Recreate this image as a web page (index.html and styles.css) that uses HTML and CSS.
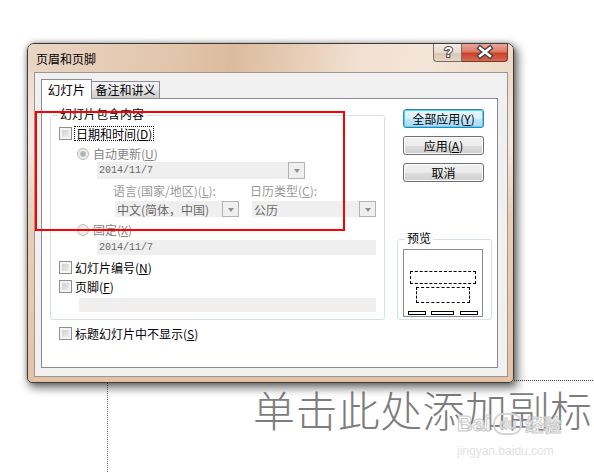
FILE: index.html
```html
<!DOCTYPE html>
<html lang="zh-CN">
<head>
    <meta charset="UTF-8">
    <meta name="viewport" content="width=device-width, initial-scale=1.0">
    <title>页眉和页脚</title>
    <link rel="stylesheet" href="styles.css">
</head>
<body>
    <div class="slide">
        <div class="subtitle-box">
            <div class="subtitle">单击此处添加副标</div>
        </div>

        <div class="watermark">
            <div class="wm-logo"><span class="wm-bai">Bai</span><span class="paw">du</span><span class="wm-cn">经验</span></div>
            <div class="wm-url">jingyan.baidu.com</div>
        </div>

        <div class="dialog">
            <div class="titlebar">
                <span class="title">页眉和页脚</span>
                <div class="caption-btns">
                    <div class="cap-btn help">
                        <svg width="29" height="18" viewBox="0 0 29 18">
                            <text x="14.5" y="14" text-anchor="middle" font-family="Liberation Sans, sans-serif" font-weight="bold" font-size="14" fill="#fff" stroke="#4b4b4b" stroke-width="2" paint-order="stroke">?</text>
                        </svg>
                    </div>
                    <div class="cap-btn close">
                        <svg width="46" height="18" viewBox="0 0 46 18">
                            <path d="M19 5 L29 13 M29 5 L19 13" stroke="#3d3d3d" stroke-width="5" stroke-linecap="square"/>
                            <path d="M19 5 L29 13 M29 5 L19 13" stroke="#fff" stroke-width="2.6" stroke-linecap="square"/>
                        </svg>
                    </div>
                </div>
            </div>

            <div class="client">
                <div class="tabs">
                    <div class="tab active">幻灯片</div>
                    <div class="tab">备注和讲义</div>
                </div>
                <div class="panel">
                    <div class="left-col">
                        <div class="group main-group">
                            <div class="legend">幻灯片包含内容</div>
                            <div class="row check-row r-date">
                                <span class="check"></span>
                                <span class="focus">日期和时间(<u>D</u>)</span>
                            </div>
                            <div class="row radio-row r-auto disabled">
                                <span class="radio on"></span>
                                <span>自动更新(<u>U</u>)</span>
                            </div>
                            <div class="combo r-datecombo">
                                <span class="field-text mono">2014/11/7</span>
                                <span class="drop"></span>
                            </div>
                            <div class="pair r-labels disabled">
                                <span class="pair-label">语言(国家/地区)(<u>L</u>):</span>
                                <span class="pair-label">日历类型(<u>C</u>):</span>
                            </div>
                            <div class="pair r-combos">
                                <div class="combo">
                                    <span class="field-text">中文(简体，中国)</span>
                                    <span class="drop"></span>
                                </div>
                                <div class="combo">
                                    <span class="field-text">公历</span>
                                    <span class="drop"></span>
                                </div>
                            </div>
                            <div class="row radio-row r-fixed disabled">
                                <span class="radio"></span>
                                <span>固定(<u>X</u>)</span>
                            </div>
                            <div class="field r-fixedfield">
                                <span class="field-text mono">2014/11/7</span>
                            </div>
                            <div class="row check-row r-num">
                                <span class="check"></span>
                                <span>幻灯片编号(<u>N</u>)</span>
                            </div>
                            <div class="row check-row r-foot">
                                <span class="check"></span>
                                <span>页脚(<u>F</u>)</span>
                            </div>
                            <div class="field r-footfield"></div>
                        </div>
                        <div class="row check-row r-hide">
                            <span class="check"></span>
                            <span>标题幻灯片中不显示(<u>S</u>)</span>
                        </div>
                    </div>

                    <div class="right-col">
                        <button class="btn default">全部应用(<u>Y</u>)</button>
                        <button class="btn">应用(<u>A</u>)</button>
                        <button class="btn">取消</button>
                        <div class="group preview-group">
                            <div class="legend">预览</div>
                            <div class="preview">
                                <div class="ph ph-title"></div>
                                <div class="ph ph-body"></div>
                                <div class="ph-bars">
                                    <span class="bar-date"></span>
                                    <span class="bar-foot"></span>
                                    <span class="bar-num"></span>
                                </div>
                            </div>
                        </div>
                    </div>
                </div>
            </div>
        </div>

        <div class="callout"></div>
    </div>
</body>
</html>
```

FILE: styles.css
```css
body {
    margin: 0;
    background: #fff;
    font-family: "Noto Sans CJK SC", "Noto Sans", sans-serif;
    font-size: 12px;
    color: #000;
}
.slide {
    position: relative;
    width: 594px;
    height: 472px;
    overflow: hidden;
    box-sizing: border-box;
    padding: 380px 0 0 107px;
}
.subtitle-box {
    width: 540px;
    height: 100px;
    border-top: 1px dotted #444;
    border-left: 1px dotted #666;
    box-sizing: border-box;
    padding: 7px 0 0 145px;
}
.subtitle {
    font-size: 42px;
    line-height: 42px;
    font-weight: 300;
    letter-spacing: 0.4px;
    color: #7d7d7d;
    white-space: nowrap;
}
.watermark {
    position: absolute;
    left: 457px;
    top: 412px;
    width: 110px;
}
.wm-logo {
    display: flex;
    align-items: center;
    height: 24px;
    font-family: "Liberation Sans", sans-serif;
    font-weight: bold;
    color: rgba(255, 255, 255, 0.7);
    -webkit-text-stroke: 1px #c9c9c9;
    white-space: nowrap;
}
.wm-bai {
    font-size: 22px;
    line-height: 24px;
}
.paw {
    font-size: 14px;
    line-height: 18px;
    padding: 0 4px;
    margin: 0 3px 0 2px;
    border: 2px solid #d4d4d4;
    border-radius: 10px;
}
.wm-cn {
    font-family: "Noto Sans CJK SC", sans-serif;
    font-size: 18px;
    line-height: 24px;
}
.wm-url {
    font-family: "Liberation Sans", sans-serif;
    font-size: 12px;
    line-height: 14px;
    margin-top: 8px;
    color: #e2e2e2;
}

/* dialog window */
.dialog {
    position: absolute;
    left: 27px;
    top: 43px;
    width: 487px;
    height: 340px;
    box-sizing: border-box;
    display: flex;
    flex-direction: column;
    border: 1px solid #3e3a37;
    border-radius: 7px 7px 5px 5px;
    background: linear-gradient(to bottom, #ead5c3 0, #f2e4d8 70px, #f4e8de 100px, #e9cfb7 170px, #e3c3a6 100%);
    box-shadow: 3px 4px 10px 1px rgba(0, 0, 0, 0.55), 0 0 5px rgba(0, 0, 0, 0.3);
}
.titlebar {
    height: 28px;
    flex: none;
    display: flex;
    align-items: center;
    padding-left: 8px;
    border-radius: 6px 6px 0 0;
    background: linear-gradient(100deg, #e9d5c4 0%, #e2c5ab 30%, #dcbb9d 42%, #e6ccb5 55%, #f1e0d1 68%, #f3e5d9 82%, #eedac8 100%);
}
.title {
    flex: 1;
    line-height: 14px;
    margin-top: 1px;
}
.caption-btns {
    align-self: flex-start;
    display: flex;
    margin-right: 5px;
}
.cap-btn {
    height: 18px;
    box-sizing: border-box;
    border: 1px solid #7a6c62;
    border-top: none;
}
.cap-btn svg {
    display: block;
    margin-top: -1px;
}
.help {
    width: 29px;
    border-radius: 0 0 0 4px;
    background: linear-gradient(to bottom, #f3ebe4 0%, #e8dbcf 50%, #d8c4b2 51%, #e6d6c8 100%);
}
.close {
    width: 46px;
    border-left: none;
    border-color: #7d3327;
    border-radius: 0 0 4px 0;
    background: linear-gradient(to bottom, #e9a89a 0%, #dc7a66 45%, #c7442b 55%, #d66a52 100%);
}
.close svg {
    margin-left: -1px;
}
.client {
    flex: 1;
    margin: 0 5px 5px 6px;
    border: 1px solid #9e958e;
    background: #f0f0f0;
    padding: 6px 0 0 6px;
}

/* tabs */
.tabs {
    display: flex;
    align-items: flex-end;
    height: 19px;
}
.tab {
    box-sizing: border-box;
    height: 17px;
    width: 68px;
    border: 1px solid #898c95;
    border-bottom: none;
    border-left: none;
    background: linear-gradient(to bottom, #f3f3f3 0%, #ebebeb 50%, #dddddd 51%, #cfcfcf 100%);
    text-align: center;
    line-height: 16px;
}
.tab.active {
    position: relative;
    z-index: 1;
    width: 51px;
    height: 20px;
    margin-bottom: -1px;
    border-left: 1px solid #898c95;
    background: #fff;
    font-size: 12.5px;
    line-height: 20px;
}
.panel {
    width: 457px;
    height: 270px;
    box-sizing: border-box;
    border: 1px solid #898c95;
    background: #fff;
    display: flex;
    gap: 12px;
    padding-left: 8px;
}

/* group boxes */
.group {
    box-sizing: border-box;
    border: 1px solid #d5dfe5;
    border-radius: 3px;
    display: flex;
    flex-direction: column;
    align-items: flex-start;
}
.legend {
    height: 14px;
    line-height: 14px;
    margin: -9px 0 0 7px;
    padding: 0 2px;
    background: #fff;
}
.main-group {
    width: 335px;
    height: 205px;
    margin-top: 16px;
}
.row {
    display: flex;
    align-items: center;
    white-space: nowrap;
}
.check-row {
    height: 15px;
    margin-left: 8px;
}
.check-row .check {
    margin-right: 3px;
}
.radio-row {
    height: 13px;
    margin-left: 26px;
}
.radio-row .radio {
    margin-right: 4px;
}
.disabled {
    color: #858585;
}
.check {
    width: 13px;
    height: 13px;
    box-sizing: border-box;
    border: 1px solid #8e8f8f;
    background: linear-gradient(135deg, #c6c8cb, #f4f4f4);
    box-shadow: inset 0 0 0 2px #f3f3f3;
}
.radio {
    width: 12px;
    height: 12px;
    box-sizing: border-box;
    border: 1px solid #bcbcbc;
    border-radius: 50%;
    background: radial-gradient(circle, #f6f6f6 0, #e4e4e4 100%);
}
.radio.on {
    background: radial-gradient(circle, #a8a8a8 0, #bdbdbd 2.5px, #efefef 3.5px, #e0e0e0 100%);
}
.focus {
    border: 1px dotted #000;
    padding: 0 1px;
    margin-left: -1px;
    line-height: 13px;
}
.r-date { margin-top: 5px; }
.r-auto { margin-top: 6px; }
.r-datecombo { margin: 2px 0 0 46px; width: 208px; }
.r-labels { margin: 6px 0 0 64px; height: 12px; line-height: 12px; color: #999; }
.r-combos { margin: 4px 0 0 64px; }
.r-fixed { margin-top: 6px; }
.r-fixedfield { margin: 4px 0 0 46px; width: 279px; height: 15px; }
.r-num { margin-top: 5px; }
.r-foot { margin-top: 4px; }
.r-footfield { margin: 4px 0 0 28px; width: 297px; height: 14px; }
.r-hide { margin: 6px 0 0 9px; }

.pair {
    display: grid;
    grid-template-columns: 124px 124px;
    column-gap: 13px;
}
.pair-label {
    margin-left: -2px;
    white-space: nowrap;
}
.combo,
.field {
    display: flex;
    align-items: center;
    justify-content: space-between;
    background: #efefef;
    box-sizing: border-box;
}
.combo {
    height: 17px;
}
.r-combos .combo {
    height: 16px;
}
.field-text {
    padding-left: 2px;
    color: #6a6a6a;
    white-space: nowrap;
}
.mono {
    font-family: "Liberation Mono", monospace;
    font-size: 10px;
}
.drop {
    width: 17px;
    height: 100%;
    box-sizing: border-box;
    border: 1px solid #b3b3b3;
    display: flex;
    align-items: center;
    justify-content: center;
}
.drop::after {
    content: "";
    border-left: 3.5px solid transparent;
    border-right: 3.5px solid transparent;
    border-top: 4px solid #8e8e8e;
    margin-top: 1px;
}

/* right column */
.right-col {
    display: flex;
    flex-direction: column;
    align-items: flex-start;
}
.btn {
    width: 81px;
    height: 19px;
    margin: 0 0 8px 6px;
    padding: 0;
    font-family: inherit;
    font-size: 12px;
    line-height: 17px;
    color: #000;
    border: 1px solid #707070;
    border-radius: 3px;
    background: linear-gradient(to bottom, #f2f2f2 0%, #ebebeb 50%, #dddddd 51%, #cfcfcf 100%);
    box-shadow: inset 0 0 0 1px #fbfbfb;
}
.btn:first-child {
    margin-top: 10px;
}
.btn.default {
    border-color: #3c7fb1;
    background: linear-gradient(to bottom, #eaf6fd 0%, #d9f0fc 50%, #bee6fd 51%, #a7d9f5 100%);
    box-shadow: inset 0 0 0 1px #48d8fb;
}
.preview-group {
    width: 95px;
    height: 81px;
    margin-top: 49px;
}
.legend + .preview {
    margin: 4px 0 0 5px;
}
.preview {
    width: 80px;
    height: 68px;
    box-sizing: border-box;
    border: 1px solid #8c8c8c;
    background: #fff;
    display: flex;
    flex-direction: column;
    align-items: flex-start;
}
.ph {
    box-sizing: border-box;
    border: 1px dashed #000;
}
.ph-title {
    width: 66px;
    height: 13px;
    margin: 21px 0 0 6px;
}
.ph-body {
    width: 54px;
    height: 16px;
    margin: 3px 0 0 12px;
}
.ph-bars {
    display: flex;
    margin: 8px 0 0 4px;
}
.ph-bars span {
    height: 4px;
    box-sizing: border-box;
    border: 1px solid #000;
}
.bar-date { width: 18px; }
.bar-foot { width: 23px; margin: 0 6px 0 5px; }
.bar-num { width: 18px; }

/* red annotation */
.callout {
    position: absolute;
    left: 35px;
    top: 111px;
    width: 310px;
    height: 120px;
    box-sizing: border-box;
    border: 2px solid #f00;
}
```
